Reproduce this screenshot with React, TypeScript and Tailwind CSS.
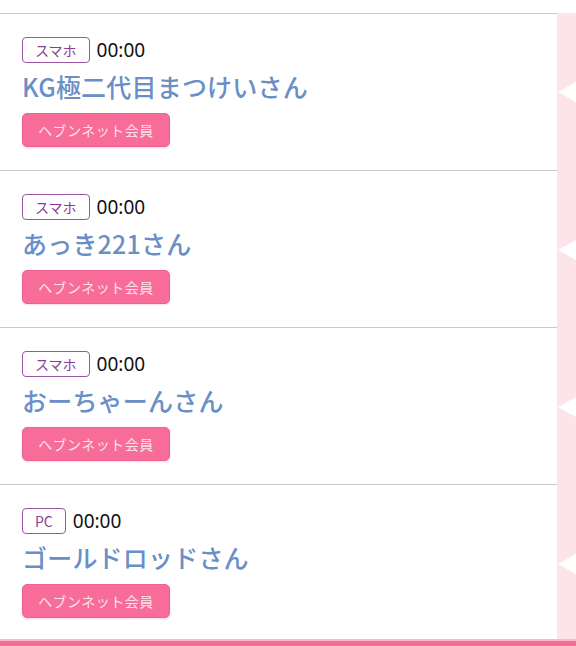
const members = [
  { device: 'スマホ', time: '00:00', name: 'KG極二代目まつけいさん' },
  { device: 'スマホ', time: '00:00', name: 'あっき221さん' },
  { device: 'スマホ', time: '00:00', name: 'おーちゃーんさん' },
  { device: 'PC', time: '00:00', name: 'ゴールドロッドさん' },
];

function MemberRow({ device, time, name, first }: { device: string; time: string; name: string; first: boolean }) {
  return (
    <div className="flex shrink-0">
      <div
        className={`flex-1 border-b border-[#c9c9c9] bg-white px-[22px] pt-[23px] pb-[23px] ${first ? 'border-t' : ''}`}
      >
        <div className="flex h-[26px] items-center gap-[7px]">
          <span className="flex h-[26px] items-center rounded-[4px] border border-[#9d55a6] px-3 text-[14px] leading-none text-[#8a3e91]">
            {device}
          </span>
          <span className="font-['Noto_Sans',sans-serif] text-[19px] font-normal leading-none text-[#111]">{time}</span>
        </div>
        <div className="mt-[7px] h-[32px] text-[25px] font-medium leading-[32px] tracking-[0.2px] text-[#6a8fc7]">
          {name}
        </div>
        <div className="mt-[11px] flex h-[34px] w-[148px] items-center justify-center rounded-[5px] border border-[#ef6290] bg-[#f76c99] text-[14px] tracking-[0.5px] text-[#fde3ec] shadow-[0_1px_2px_rgba(240,100,140,0.25)]">
          ヘブンネット会員
        </div>
      </div>
      <div className="flex w-[19px] items-center justify-end bg-[#fde4e8]">
        <div className="h-0 w-0 border-y-[10px] border-r-[18px] border-y-transparent border-r-white" />
      </div>
    </div>
  );
}

export default function App() {
  return (
    <div className="flex h-[646px] w-[576px] flex-col overflow-hidden bg-white font-['Noto_Sans_CJK_JP','Noto_Sans',sans-serif]">
      <div className="h-[13px] shrink-0 bg-white" />
      <div className="flex flex-1 flex-col overflow-hidden">
        {members.map((m, i) => (
          <MemberRow key={i} device={m.device} time={m.time} name={m.name} first={i === 0} />
        ))}
      </div>
      <div className="h-[2px] shrink-0 bg-[#f9b9cc]" />
      <div className="h-[5px] shrink-0 bg-[#f56c97]" />
    </div>
  );
}
